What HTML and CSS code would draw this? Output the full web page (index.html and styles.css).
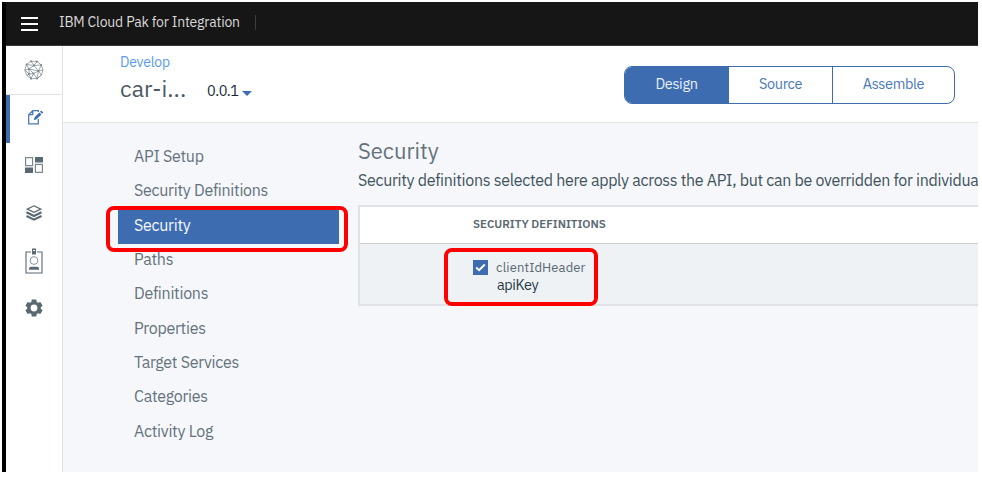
FILE: index.html
```html
<!DOCTYPE html>
<html lang="en">
<head>
<meta charset="utf-8">
<title>IBM Cloud Pak for Integration</title>
<link rel="stylesheet" href="styles.css">
</head>
<body>
<div class="window">
  <header class="topbar">
    <svg class="menu" viewBox="0 0 17 14"><path d="M0 1h17M0 7h17M0 13h17" stroke="#fff" stroke-width="2"/></svg>
    <span class="brand">IBM Cloud Pak for Integration</span>
    <span class="separator"></span>
  </header>
  <div class="body">
    <nav class="rail">
      <a class="rail-item home"><svg width="20" height="20" viewBox="0 0 20 20" fill="none" stroke="#78838a" stroke-width=".7"><path d="M7 1.200 13 1.500l4.300 3.500L19 10l-1.500 5-4.500 3.600-6 .1L2.800 15.500.8 10l1.700-5.500z"/><path d="M7 1.200l3 4.300 3-4M10 5.500l7.300-.5-2.800 6L10 5.500 5 9l-2.500-4.500 7.500 1M5 9l-4.200 1L5 14V9l4.500 4.500 5-2.500 4.500-1M5 14l4.500-.500 3.500 5 1.500-7.500 3 4-4.500 3.600M5 14l-2.200 1.500M5 14l2 4.700 2.500-5.200M5 9l9.500 2"/><path d="M7 1.200h0M13 1.500h0M17.300 5h0M10 5.500h0M5 9h0M14.500 11h0M9.500 13.500h0M5 14h0M13 18.600h0M7 18.700h0M2.500 4.500h0" stroke-width="1.800" stroke-linecap="round"/></svg></a>
      <a class="rail-item current"><svg width="18" height="18" viewBox="0 0 18 18"><path d="M12.300 4V2.600H6.800L2.700 6.700v9.100h9.600V11M6.800 2.600v4.100H2.700" fill="none" stroke="#4a79b7" stroke-width="1.300"/><path d="m7.800 12.200.8-3L13.400 4.400l2 2-4.800 4.800zM14 3.800l1.200-1.200 2 2L16 5.800z" fill="#3d6db0"/></svg></a>
      <a class="rail-item"><svg width="18" height="16" viewBox="0 0 18 16" fill="#5a6872"><path d="M10 0h8v5.500h-8zM0 10.500h8V16H0z"/><path d="M.6.600h7v8H.6zM10.400 7.400h7v8h-7z" fill="none" stroke="#7c8890" stroke-width="1.200"/></svg></a>
      <a class="rail-item"><svg width="16" height="16" viewBox="0 0 16 16" fill="none" stroke="#5a6872" stroke-width="1.200"><path d="m8 .8 6.700 3.300L8 7.400 1.300 4.100z"/><path d="m.5 7.300 7.500 3.700 7.500-3.700M.5 11l7.500 3.700L15.500 11" stroke-width="2.100"/></svg></a>
      <a class="rail-item badge"><svg width="18" height="26" viewBox="0 0 18 26" fill="none" stroke="#5a6872"><path d="M6 4H1v21h16V4h-5" stroke-width="1.100"/><path d="M7 .500h4v6H7z" fill="#5a6872" stroke="none"/><path d="M8 2h2v1H8z" fill="#fff" stroke="none"/><circle cx="9" cy="12.500" r="3.900" stroke="#87929a"/><path d="M4 21.700v-1c0-1.300.8-2 2-2h6c1.200 0 2 .7 2 2v1z" fill="#5a6872" stroke="none"/></svg></a>
      <a class="rail-item"><svg width="18" height="18" viewBox="0 0 18 18"><path fill="#5a6872" fill-rule="evenodd" d="M6.800.500h4.400l.5 2.400 1.400.8 2.300-.8 2.200 3.800-1.800 1.500v1.600l1.800 1.500-2.200 3.800-2.300-.8-1.400.8-.5 2.400H6.800l-.5-2.400-1.400-.8-2.300.8-2.200-3.800 1.800-1.500V8.200L.4 6.700l2.200-3.800 2.300.8 1.400-.8zM9 5.600a3.400 3.400 0 1 0 0 6.800 3.400 3.400 0 0 0 0-6.800z"/></svg></a>
    </nav>
    <main class="main">
      <section class="heading">
        <div class="title-block">
          <a class="crumb">Develop</a>
          <div class="title-row"><h1>car-i...</h1><span class="version">0.0.1</span><i class="caret"></i></div>
        </div>
        <div class="tabs"><a class="tab active">Design</a><a class="tab">Source</a><a class="tab">Assemble</a></div>
      </section>
      <section class="content">
        <nav class="side">
          <a>API Setup</a>
          <a>Security Definitions</a>
          <a class="selected">Security</a>
          <a>Paths</a>
          <a>Definitions</a>
          <a>Properties</a>
          <a>Target Services</a>
          <a>Categories</a>
          <a>Activity Log</a>
        </nav>
        <div class="panel">
          <h2>Security</h2>
          <p class="intro">Security definitions selected here apply across the API, but can be overridden for individua</p>
          <div class="table">
            <div class="thead">SECURITY DEFINITIONS</div>
            <div class="row">
              <svg class="check" viewBox="0 0 15 15"><path fill="#3d6db0" d="M0 0h15v15H0z"/><path d="m3.200 7.500 2.900 2.700 5.700-5.700" fill="none" stroke="#fff" stroke-width="2"/></svg>
              <div class="labels"><span class="name">clientIdHeader</span><span class="kind">apiKey</span></div>
            </div>
          </div>
        </div>
      </section>
    </main>
  </div>
  <div class="callout callout-nav"></div>
  <div class="callout callout-row"></div>
</div>
</body>
</html>
```
FILE: styles.css
```css
* { box-sizing: border-box; }
body { margin: 0; background: #fff; font-family: "IBM Plex Sans", Roboto, sans-serif; color: #5a6872; }
.window { position: relative; width: 976px; height: 470px; margin: 2px; overflow: hidden; border-left: 4px solid #000; display: flex; flex-direction: column; }
.topbar { height: 44px; flex: none; background: #161616; border-bottom: 1px solid #393939; display: flex; align-items: center; padding: 0 0 3px 15px; }
.menu { width: 17px; height: 14px; margin-top: 3px; }
.brand { width: 181px; margin-left: 21px; font-size: 14px; letter-spacing: -.2px; color: #d8d8d8; white-space: nowrap; }
.separator { width: 1px; height: 15px; margin-left: 15px; background: #3d3d3d; }
.body { flex: 1; display: flex; min-height: 0; }
.rail { width: 57px; flex: none; border-right: 1px solid #dfe3e6; background: #fff; display: flex; flex-direction: column; }
.rail-item { height: 47.500px; flex: none; display: flex; align-items: center; justify-content: center; padding: 0 0 2px; }
.rail-item svg { display: block; }
.home { height: 49px; border-bottom: 1px solid #dfe3e6; padding-bottom: 1px; }
.current { border-left: 4px solid #3d6db0; padding: 0 3px 3px 0; }
.badge { padding-bottom: 1px; }
.main { flex: 1; min-width: 0; display: flex; flex-direction: column; background: #f5f7fb; }
.heading { height: 77px; flex: none; background: #fff; border-bottom: 1px solid #dfe3e6; display: flex; justify-content: space-between; padding: 7px 23px 0 57px; }
.crumb { display: block; font-size: 14px; line-height: 18px; letter-spacing: -.2px; color: #5a9bef; }
.title-row { display: flex; align-items: center; height: 34px; }
h1 { margin: 0 0 1px; width: 87px; font-size: 23px; font-weight: 400; letter-spacing: .1px; color: #4a5963; }
.version { font-size: 14.500px; letter-spacing: -.5px; width: 35px; color: #152935; margin-top: 4px; }
.caret { border: 5px solid transparent; border-top-color: #3d6db0; border-bottom: 0; margin-top: 11px; }
.tabs { display: flex; height: 38px; margin-top: 13px; width: 331px; border: 1px solid #3d6db0; border-radius: 8px; overflow: hidden; }
.tab { width: 104px; display: flex; justify-content: center; align-items: center; font-size: 14.500px; letter-spacing: -.35px; color: #4a79b7; border-left: 1px solid #3d6db0; padding-bottom: 3px; }
.tab:first-child { border-left: 0; width: 103px; }
.tab:last-child { flex: 1; }
.active { background: #3d6db0; color: #e9f0f8; }
.content { flex: 1; display: flex; padding: 17px 0 0 55px; min-width: 0; }
.side { width: 221px; flex: none; margin-top: 1px; }
.side a { display: flex; align-items: center; height: 34.330px; padding: 0 0 4px 16px; font-size: 16px; letter-spacing: -.28px; color: #65727b; }
.side .selected { background: #3d6db0; color: #f4f7fb; padding-bottom: 3px; }
.panel { flex: 1; min-width: 0; margin-left: 19px; }
h2 { margin: -4px 0 0; font-size: 22px; line-height: 30px; font-weight: 400; letter-spacing: 0; color: #65727b; }
.intro { margin: 3px 0 14px; font-size: 16px; line-height: 22px; letter-spacing: -.3px; color: #42535c; white-space: nowrap; }
.table { border: 2px solid #dfe3e6; border-right: 0; height: 101px; }
.thead { height: 37px; border-bottom: 1px solid #ccd0d3; background: #fff; padding: 10px 0 0 113px; font-size: 11.500px; line-height: 14px; font-weight: 600; letter-spacing: 0; }
.row { height: 60px; background: #eef2f5; display: flex; padding: 15px 0 0 113px; }
.check { width: 15px; height: 15px; flex: none; margin-top: 1px; }
.labels { display: flex; flex-direction: column; margin-left: 8px; }
.name { font-size: 13px; line-height: 17px; letter-spacing: .12px; }
.kind { margin-left: 1px; font-size: 14.500px; line-height: 18px; letter-spacing: -.4px; color: #253944; }
.callout { position: absolute; border: 4px solid #f00; border-radius: 8px; }
.callout-nav { left: 100px; top: 204px; width: 242px; height: 46px; }
.callout-row { left: 438px; top: 246px; width: 154px; height: 58px; }
```
